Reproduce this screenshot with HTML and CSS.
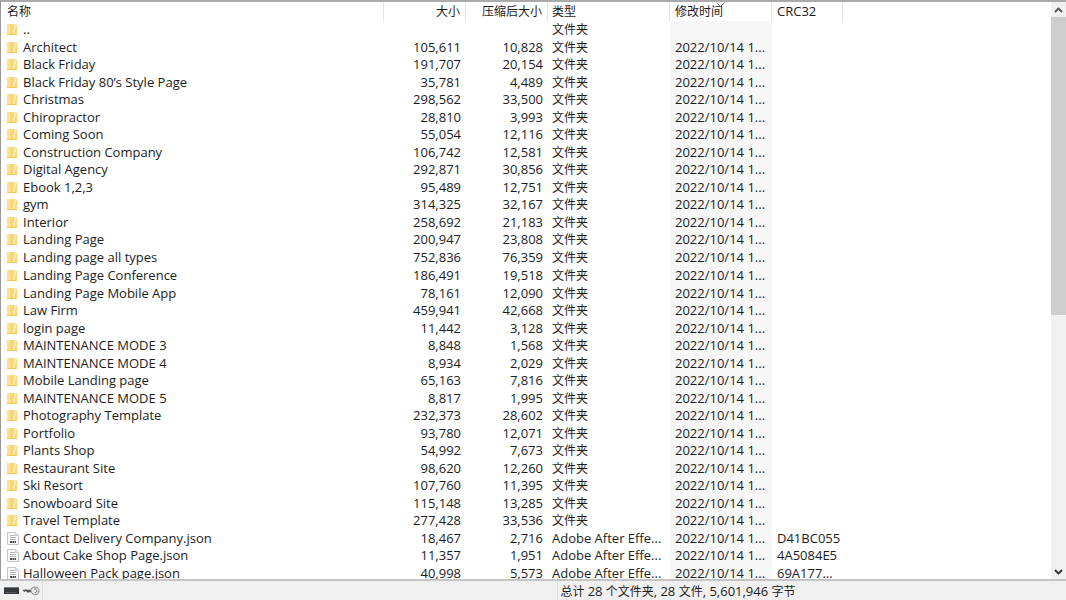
FILE: index.html
```html
<!DOCTYPE html>
<html lang="zh-CN">
<head>
    <meta charset="UTF-8">
    <meta name="viewport" content="width=device-width, initial-scale=1.0">
    <title>文件列表</title>
    <link rel="stylesheet" href="styles.css">
</head>
<body>

    <!-- Shared icons -->
    <svg class="sprite" aria-hidden="true">
        <symbol id="folder" viewBox="0 0 12 13">
            <path d="M0 1h8l2 1v10H0z" fill="#f8d775"/>
            <path d="M0 1h3v11H0z" fill="#fbe096"/>
            <path d="M8 1h1v5l-1 1v5H6V7l1-1V1z" fill="#fce7ae"/>
            <path d="M0 11h10v1H0z" fill="#f0c55a"/>
        </symbol>
        <symbol id="json" viewBox="0 0 12 13">
            <path d="M.5.500h8l3 3v9H.5z" fill="#f8f8f8" stroke="#c4c4c4"/>
            <path d="M8.500.500v3h3" fill="none" stroke="#d2d2d2"/>
            <path d="M3 3.500h5M3 5.500h6M3 7.500h6" stroke="#b4b4ba"/>
            <path d="M3 10h2M5.500 10h1.500M7.500 10H9" stroke="#4c4c4c" stroke-width="2"/>
        </symbol>
    </svg>

    <!-- File list -->
    <main class="list">
        <div class="files">
            <table>
                <colgroup>
                    <col class="col-name">
                    <col class="col-size">
                    <col class="col-size">
                    <col class="col-type">
                    <col class="col-date">
                    <col class="col-crc">
                    <col>
                </colgroup>
                <thead>
                    <tr><th>名称</th><th class="num">大小</th><th class="num">压缩后大小</th><th class="type">类型</th><th class="sorted">修改时间<svg class="sort" viewBox="0 0 9 5"><path d="M.5.500l4 4 4-4" fill="none" stroke="#777"/></svg></th><th class="latin">CRC32</th><td></td></tr>
                </thead>
                <tbody>
                    <tr><td><svg class="icon"><use href="#folder"/></svg>..</td><td></td><td></td><td>文件夹</td><td></td><td></td><td></td></tr>
                    <tr><td><svg class="icon"><use href="#folder"/></svg>Architect</td><td>105,611</td><td>10,828</td><td>文件夹</td><td>2022/10/14 1...</td><td></td><td></td></tr>
                    <tr><td><svg class="icon"><use href="#folder"/></svg>Black Friday</td><td>191,707</td><td>20,154</td><td>文件夹</td><td>2022/10/14 1...</td><td></td><td></td></tr>
                    <tr><td><svg class="icon"><use href="#folder"/></svg>Black Friday 80’s Style Page</td><td>35,781</td><td>4,489</td><td>文件夹</td><td>2022/10/14 1...</td><td></td><td></td></tr>
                    <tr><td><svg class="icon"><use href="#folder"/></svg>Christmas</td><td>298,562</td><td>33,500</td><td>文件夹</td><td>2022/10/14 1...</td><td></td><td></td></tr>
                    <tr><td><svg class="icon"><use href="#folder"/></svg>Chiropractor</td><td>28,810</td><td>3,993</td><td>文件夹</td><td>2022/10/14 1...</td><td></td><td></td></tr>
                    <tr><td><svg class="icon"><use href="#folder"/></svg>Coming Soon</td><td>55,054</td><td>12,116</td><td>文件夹</td><td>2022/10/14 1...</td><td></td><td></td></tr>
                    <tr><td><svg class="icon"><use href="#folder"/></svg>Construction Company</td><td>106,742</td><td>12,581</td><td>文件夹</td><td>2022/10/14 1...</td><td></td><td></td></tr>
                    <tr><td><svg class="icon"><use href="#folder"/></svg>Digital Agency</td><td>292,871</td><td>30,856</td><td>文件夹</td><td>2022/10/14 1...</td><td></td><td></td></tr>
                    <tr><td><svg class="icon"><use href="#folder"/></svg>Ebook 1,2,3</td><td>95,489</td><td>12,751</td><td>文件夹</td><td>2022/10/14 1...</td><td></td><td></td></tr>
                    <tr><td><svg class="icon"><use href="#folder"/></svg>gym</td><td>314,325</td><td>32,167</td><td>文件夹</td><td>2022/10/14 1...</td><td></td><td></td></tr>
                    <tr><td><svg class="icon"><use href="#folder"/></svg>Interior</td><td>258,692</td><td>21,183</td><td>文件夹</td><td>2022/10/14 1...</td><td></td><td></td></tr>
                    <tr><td><svg class="icon"><use href="#folder"/></svg>Landing Page</td><td>200,947</td><td>23,808</td><td>文件夹</td><td>2022/10/14 1...</td><td></td><td></td></tr>
                    <tr><td><svg class="icon"><use href="#folder"/></svg>Landing page all types</td><td>752,836</td><td>76,359</td><td>文件夹</td><td>2022/10/14 1...</td><td></td><td></td></tr>
                    <tr><td><svg class="icon"><use href="#folder"/></svg>Landing Page Conference</td><td>186,491</td><td>19,518</td><td>文件夹</td><td>2022/10/14 1...</td><td></td><td></td></tr>
                    <tr><td><svg class="icon"><use href="#folder"/></svg>Landing Page Mobile App</td><td>78,161</td><td>12,090</td><td>文件夹</td><td>2022/10/14 1...</td><td></td><td></td></tr>
                    <tr><td><svg class="icon"><use href="#folder"/></svg>Law Firm</td><td>459,941</td><td>42,668</td><td>文件夹</td><td>2022/10/14 1...</td><td></td><td></td></tr>
                    <tr><td><svg class="icon"><use href="#folder"/></svg>login page</td><td>11,442</td><td>3,128</td><td>文件夹</td><td>2022/10/14 1...</td><td></td><td></td></tr>
                    <tr><td><svg class="icon"><use href="#folder"/></svg>MAINTENANCE MODE 3</td><td>8,848</td><td>1,568</td><td>文件夹</td><td>2022/10/14 1...</td><td></td><td></td></tr>
                    <tr><td><svg class="icon"><use href="#folder"/></svg>MAINTENANCE MODE 4</td><td>8,934</td><td>2,029</td><td>文件夹</td><td>2022/10/14 1...</td><td></td><td></td></tr>
                    <tr><td><svg class="icon"><use href="#folder"/></svg>Mobile Landing page</td><td>65,163</td><td>7,816</td><td>文件夹</td><td>2022/10/14 1...</td><td></td><td></td></tr>
                    <tr><td><svg class="icon"><use href="#folder"/></svg>MAINTENANCE MODE 5</td><td>8,817</td><td>1,995</td><td>文件夹</td><td>2022/10/14 1...</td><td></td><td></td></tr>
                    <tr><td><svg class="icon"><use href="#folder"/></svg>Photography Template</td><td>232,373</td><td>28,602</td><td>文件夹</td><td>2022/10/14 1...</td><td></td><td></td></tr>
                    <tr><td><svg class="icon"><use href="#folder"/></svg>Portfolio</td><td>93,780</td><td>12,071</td><td>文件夹</td><td>2022/10/14 1...</td><td></td><td></td></tr>
                    <tr><td><svg class="icon"><use href="#folder"/></svg>Plants Shop</td><td>54,992</td><td>7,673</td><td>文件夹</td><td>2022/10/14 1...</td><td></td><td></td></tr>
                    <tr><td><svg class="icon"><use href="#folder"/></svg>Restaurant Site</td><td>98,620</td><td>12,260</td><td>文件夹</td><td>2022/10/14 1...</td><td></td><td></td></tr>
                    <tr><td><svg class="icon"><use href="#folder"/></svg>Ski Resort</td><td>107,760</td><td>11,395</td><td>文件夹</td><td>2022/10/14 1...</td><td></td><td></td></tr>
                    <tr><td><svg class="icon"><use href="#folder"/></svg>Snowboard Site</td><td>115,148</td><td>13,285</td><td>文件夹</td><td>2022/10/14 1...</td><td></td><td></td></tr>
                    <tr><td><svg class="icon"><use href="#folder"/></svg>Travel Template</td><td>277,428</td><td>33,536</td><td>文件夹</td><td>2022/10/14 1...</td><td></td><td></td></tr>
                    <tr><td><svg class="icon"><use href="#json"/></svg>Contact Delivery Company.json</td><td>18,467</td><td>2,716</td><td class="latin">Adobe After Effe...</td><td>2022/10/14 1...</td><td>D41BC055</td><td></td></tr>
                    <tr><td><svg class="icon"><use href="#json"/></svg>About Cake Shop Page.json</td><td>11,357</td><td>1,951</td><td class="latin">Adobe After Effe...</td><td>2022/10/14 1...</td><td>4A5084E5</td><td></td></tr>
                    <tr><td><svg class="icon"><use href="#json"/></svg>Halloween Pack page.json</td><td>40,998</td><td>5,573</td><td class="latin">Adobe After Effe...</td><td>2022/10/14 1...</td><td>69A177...</td><td></td></tr>
                </tbody>
            </table>
        </div>

        <!-- Scroll bar -->
        <div class="scrollbar">
            <button type="button" aria-label="向上滚动"><svg viewBox="0 0 9 6"><path d="M1 5l3.500-3.500L8 5" fill="none" stroke="#505050" stroke-width="1.800"/></svg></button>
            <div class="track"><div class="thumb"></div></div>
            <button type="button" aria-label="向下滚动"><svg viewBox="0 0 9 6"><path d="M1 1l3.500 3.500L8 1" fill="none" stroke="#303030" stroke-width="1.800"/></svg></button>
        </div>
    </main>

    <!-- Status bar -->
    <footer class="status">
        <div class="status-icons">
            <svg class="drive" viewBox="0 0 16 8"><path d="M0 0h15v7H0z" fill="#34383b"/><path d="M0 0h15v1H0z" fill="#777"/><path d="M1 5h11v1H1z" fill="#555b60"/></svg>
            <svg class="key" viewBox="0 0 17 10"><path d="M0 4.500h8M1 5.500l2-1.500 2 2 3-1" fill="none" stroke="#555" stroke-width="1.500"/><path d="M8 3c2-3 8-2.500 8 2S10 10 8 6z" fill="#e4e4e4" stroke="#888"/><path d="M11 3c3-1 4 3 1 4" fill="none" stroke="#777"/></svg>
        </div>
        <div class="status-selected"></div>
        <div class="status-total">总计 <span>28</span> 个文件夹<span>, 28 </span>文件<span>, 5,601,946 </span>字节</div>
    </footer>

</body>
</html>
```
FILE: styles.css
```css
body {
    margin: 0;
    height: 100vh;
    display: flex;
    flex-direction: column;
    overflow: hidden;
    background-color: #ffffff;
    color: #1c1c1c;
    font-family: "Open Sans", "Noto Sans CJK SC", sans-serif;
    font-size: 13px;
}
.sprite {
    display: none;
}
.list {
    flex: 1;
    min-height: 0;
    display: flex;
    border-top: 2px solid #aaaaaa;
    border-left: 1px solid #999999;
}
.files {
    flex: 1;
    min-width: 0;
    overflow: hidden;
}
table {
    width: 100%;
    table-layout: fixed;
    border-collapse: separate;
    border-spacing: 0;
}
.col-name {
    width: 383px;
}
.col-size {
    width: 82px;
}
.col-type {
    width: 122px;
}
.col-date {
    width: 102px;
}
.col-crc {
    width: 71px;
}
th,
td {
    box-sizing: border-box;
    padding: 0 5px;
    text-align: left;
    font-weight: normal;
    line-height: 17px;
    white-space: nowrap;
}
th {
    height: 19px;
    border-right: 1px solid #e4e4e4;
    font-size: 12px;
}
th.num {
    text-align: right;
}
th:first-child,
td:first-child {
    padding-left: 6px;
}
tbody td {
    height: 17px;
}
tbody tr:nth-child(even) td,
tbody tr:nth-child(15) td {
    height: 18px;
}
td:nth-child(2),
td:nth-child(3) {
    text-align: right;
}
td:nth-child(4) {
    font-size: 12px;
}
th.type,
td:nth-child(4) {
    padding-left: 4px;
}
th.latin,
td.latin {
    font-size: 13px;
}
td:nth-child(5) {
    background-color: #f7f7f7;
}
.icon {
    width: 12px;
    height: 13px;
    margin-right: 4px;
    vertical-align: -2px;
}
.sorted {
    position: relative;
}
.sort {
    position: absolute;
    top: 0;
    left: 46%;
    width: 9px;
    height: 5px;
}
.scrollbar {
    width: 15px;
    display: flex;
    flex-direction: column;
    background-color: #f0f0f0;
}
.scrollbar button {
    height: 15px;
    padding: 0;
    border: none;
    background: none;
    display: flex;
    align-items: center;
    justify-content: center;
}
.scrollbar svg {
    width: 9px;
    height: 6px;
}
.track {
    flex: 1;
}
.thumb {
    height: 54.4%;
    background-color: #cdcdcd;
}
.status {
    height: 19px;
    display: flex;
    border-top: 2px solid #c4c4c4;
    background-color: #f0f0f0;
    line-height: 17px;
}
.status-icons {
    box-sizing: border-box;
    width: 43px;
    padding-left: 4px;
    display: flex;
    align-items: center;
    gap: 3px;
    border-right: 1px solid #dcdcdc;
}
.drive {
    width: 16px;
    height: 8px;
}
.key {
    width: 17px;
    height: 10px;
}
.status-selected {
    flex: 1;
    border-right: 1px solid #dcdcdc;
}
.status-total {
    box-sizing: border-box;
    width: 47.7%;
    padding: 2px 0 0 3px;
    font-size: 12px;
}
.status-total span {
    font-size: 13px;
}
```
